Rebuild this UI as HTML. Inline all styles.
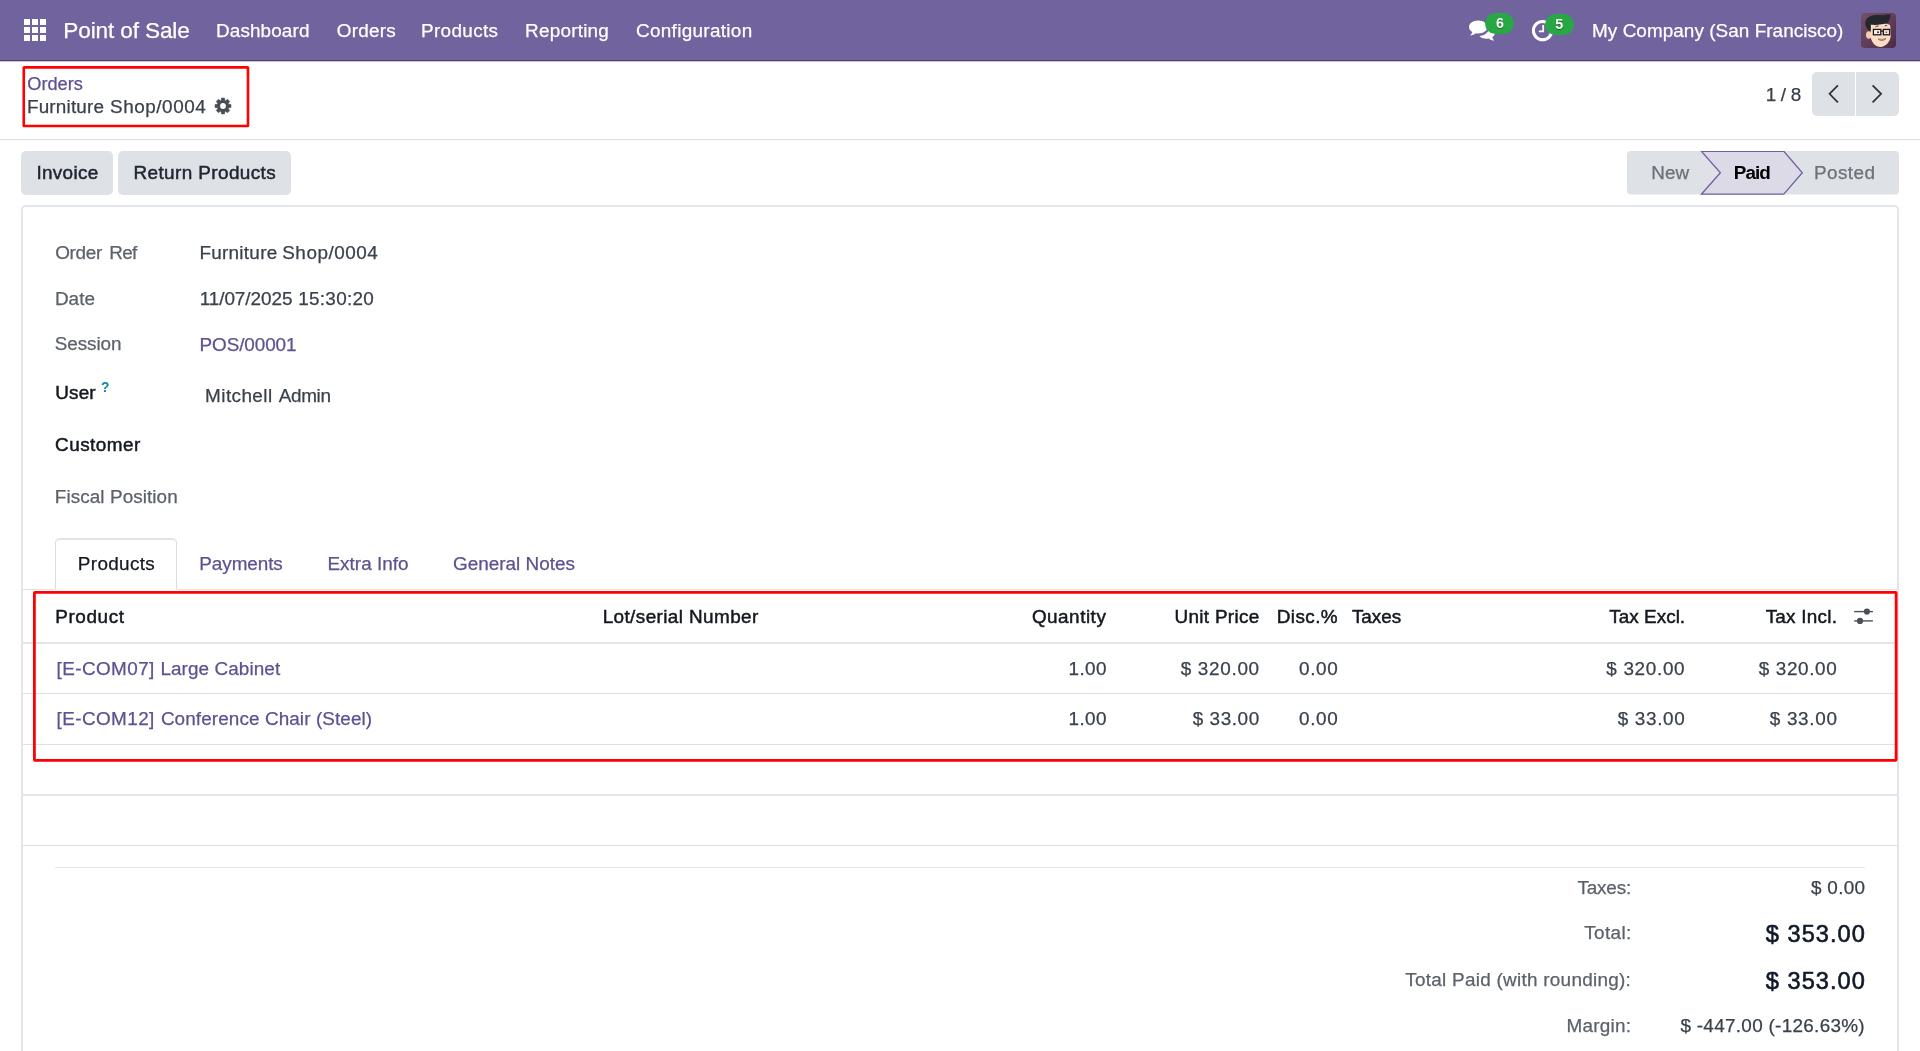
<!DOCTYPE html>
<html lang="en">
<head>
<meta charset="utf-8">
<title>Odoo - Furniture Shop/0004</title>
<style>
*{box-sizing:border-box;margin:0;padding:0}
html,body{width:1920px;height:1051px;overflow:hidden;background:#fff}
body{position:relative;font-family:"Liberation Sans",sans-serif;color:#374151}
.abs,.t{position:absolute}
.t{white-space:nowrap;line-height:1;display:block;-webkit-text-stroke:.25px}
.nv{color:#fff}
.bd{color:#fff;font-weight:bold;-webkit-text-stroke:0;text-shadow:0 1px 1px rgba(0,0,0,.4)}
.lk{color:#5d5190}
.tx{color:#3a414b}
.bt{color:#1f2630;-webkit-text-stroke:.5px}
.mu{color:#6b7079}
.bk{color:#000;font-weight:bold;-webkit-text-stroke:0}
.lb{color:#5c616a}
.hd{color:#14181f;-webkit-text-stroke:.48px}
.dk{color:#14181f}
.inf{color:#0f86ab;font-weight:bold;-webkit-text-stroke:0}
.big{color:#111827;-webkit-text-stroke:.6px}
/* navbar */
.navbar{left:0;top:0;width:1920px;height:62px;background:#71639e;border-bottom:1px solid #c9c5d6;box-shadow:inset 0 -1px 0 #4c4075}
.sq{position:absolute;width:6.3px;height:6.3px;background:#fff}
.badge{background:#28a745;border-radius:11px;height:21px;width:28.5px;top:13.3px}
.avatar{left:1861px;top:13px;width:35px;height:35px;border-radius:4px;overflow:hidden}
/* control panel */
.cp{left:0;top:62px;width:1920px;height:78px;background:#fff;border-bottom:1px solid #dcdfe5}
.redbox{border:2px solid #ff0000;background:transparent}
.btn{background:#dee1e6;border-radius:5px;top:151.2px;height:43.4px}
.pg{background:#dee1e6;top:72px;height:43.7px}
.sheet{left:21px;top:205px;width:1878px;height:900px;border:2px solid #e4e5ea;border-radius:5px;background:#fff}
.hl{height:1px;background:#dee1e6}
</style>
</head>
<body>
<!-- NAVBAR -->
<nav class="abs navbar" aria-label="Main navigation">
  <div class="apps" title="Home Menu">
    <span class="sq" style="left:24.0px;top:19.0px"></span>
    <span class="sq" style="left:32.0px;top:19.0px"></span>
    <span class="sq" style="left:40.0px;top:19.0px"></span>
    <span class="sq" style="left:24.0px;top:27.0px"></span>
    <span class="sq" style="left:32.0px;top:27.0px"></span>
    <span class="sq" style="left:40.0px;top:27.0px"></span>
    <span class="sq" style="left:24.0px;top:35.0px"></span>
    <span class="sq" style="left:32.0px;top:35.0px"></span>
    <span class="sq" style="left:40.0px;top:35.0px"></span>
  </div>
  <!-- discuss icon -->
  <svg class="abs" style="left:1468px;top:19px" width="27" height="23" viewBox="0 0 27 23">
    <path d="M10.2 1.6 C5.1 1.6 1 4.5 1 8.1 c0 2 1.3 3.8 3.3 5 c-.4 1.4-1.2 2.5-2.3 3.4 c2.3-.1 4.300-.9 5.700-2.200 c.8.2 1.6.3 2.500.3 c5.100 0 9.200-2.900 9.200-6.500 S15.300 1.600 10.200 1.600z" fill="#fff"/>
    <path d="M21 9.300 c0 .3 0 .6-.1.900 c-.7 3.600-4.600 6.400-9.600 6.700 c1.500 1.700 4.100 2.800 7 2.800 c.9 0 1.700-.1 2.500-.3 c1.400 1.300 3.400 2.100 5.700 2.200 c-1.100-.9-1.900-2-2.300-3.400 c1.600-1 2.600-2.400 2.600-4 c0-2.200-2.300-4.100-5.800-4.900z" fill="#fff" opacity=".96"/>
  </svg>
  <div class="abs badge" style="left:1485.4px"></div>
  <!-- activity clock -->
  <svg class="abs" style="left:1531px;top:19px" width="24" height="24" viewBox="0 0 24 24">
    <circle cx="11.6" cy="11.6" r="9.2" fill="none" stroke="#fff" stroke-width="3"/>
    <path d="M12.2 6v6.400h-4.400" fill="none" stroke="#fff" stroke-width="1.800"/>
  </svg>
  <div class="abs badge" style="left:1545.3px;top:13.6px"></div>
  <!-- avatar -->
  <svg class="abs avatar" viewBox="0 0 35 35" role="img" aria-label="Mitchell Admin">
    <defs><linearGradient id="avbg" x1="0" y1="0" x2="1" y2="1"><stop offset="0" stop-color="#73506b"/><stop offset="1" stop-color="#4d2a45"/></linearGradient></defs>
    <rect width="35" height="35" fill="url(#avbg)"/>
    <ellipse cx="7.800" cy="22" rx="2.800" ry="3.800" fill="#f6cdb4"/>
    <path d="M9.600 12 C9.600 10 29.200 9 29.300 13 L29.800 22 C29.800 29 24 34 19.500 34 C15 34 10.500 30 9.800 24z" fill="#fbdcc4"/>
    <path d="M4.200 10.500 C4 5 10 1.500 17 2 C22 2.200 25 2.500 26.500 1 C27 2 28.500 1 29.500 1.800 C29.500 5 28 8.500 26.500 10 C22 11.500 14 12.500 9.500 11.500 C10 14 10 16.500 9.300 18 C6.500 17 4.500 14 4.200 10.500z" fill="#24272c"/>
    <rect x="12.400" y="16.400" width="7.400" height="5.400" fill="#fff" fill-opacity=".55" stroke="#1c1d21" stroke-width="1.300"/>
    <rect x="22.300" y="16.400" width="6.400" height="5.400" fill="#f7d9d9" fill-opacity=".6" stroke="#1c1d21" stroke-width="1.300"/>
    <path d="M19.800 18.200h2.500" stroke="#1c1d21" stroke-width="1.200"/>
    <circle cx="17" cy="19.200" r="1" fill="#2b2b33"/>
    <circle cx="25.300" cy="19.200" r=".8" fill="#6b5560"/>
    <path d="M14.400 13.700 Q16 12.600 17.600 13.100" fill="none" stroke="#3a3034" stroke-width=".9"/>
    <path d="M23.800 12.900 Q25 12.100 26.200 12.800" fill="none" stroke="#3a3034" stroke-width=".9"/>
    <path d="M17.100 26 Q21 29.400 24.900 25.600 Q21 27 17.100 26z" fill="#f4d6d6" stroke="#7d5148" stroke-width=".7"/>
  </svg>
</nav>

<!-- CONTROL PANEL -->
<header class="abs cp"></header>
<svg class="abs" style="left:20px;top:63px" width="234" height="68" viewBox="20 63 234 68"><rect x="23.75" y="67.4" width="224.25" height="58.6" rx=".6" fill="none" stroke="#ff0000" stroke-width="2.6"/></svg>
<!-- gear -->
<svg class="abs" style="left:214px;top:97px" width="18" height="18" viewBox="-9 -9 18 18">
  <g fill="#484e57">
    <circle r="5.500"/>
    <path d="M-2.05 -4.8 L-1.5 -8 H1.5 L2.05 -4.8Z" stroke="#484e57" stroke-width=".5" stroke-linejoin="round" transform="rotate(0)"/>
    <path d="M-2.05 -4.8 L-1.5 -8 H1.5 L2.05 -4.8Z" stroke="#484e57" stroke-width=".5" stroke-linejoin="round" transform="rotate(45)"/>
    <path d="M-2.05 -4.8 L-1.5 -8 H1.5 L2.05 -4.8Z" stroke="#484e57" stroke-width=".5" stroke-linejoin="round" transform="rotate(90)"/>
    <path d="M-2.05 -4.8 L-1.5 -8 H1.5 L2.05 -4.8Z" stroke="#484e57" stroke-width=".5" stroke-linejoin="round" transform="rotate(135)"/>
    <path d="M-2.05 -4.8 L-1.5 -8 H1.5 L2.05 -4.8Z" stroke="#484e57" stroke-width=".5" stroke-linejoin="round" transform="rotate(180)"/>
    <path d="M-2.05 -4.8 L-1.5 -8 H1.5 L2.05 -4.8Z" stroke="#484e57" stroke-width=".5" stroke-linejoin="round" transform="rotate(225)"/>
    <path d="M-2.05 -4.8 L-1.5 -8 H1.5 L2.05 -4.8Z" stroke="#484e57" stroke-width=".5" stroke-linejoin="round" transform="rotate(270)"/>
    <path d="M-2.05 -4.8 L-1.5 -8 H1.5 L2.05 -4.8Z" stroke="#484e57" stroke-width=".5" stroke-linejoin="round" transform="rotate(315)"/>
  </g>
  <circle r="2.900" fill="#fff"/>
</svg>
<!-- pager -->
<div class="abs pg" style="left:1812px;width:43px;border-radius:5px 0 0 5px"></div>
<div class="abs pg" style="left:1856px;width:43px;border-radius:0 5px 5px 0"></div>
<svg class="abs" style="left:1812px;top:72px" width="87" height="44" viewBox="0 0 87 44">
  <path d="M25.900 13.300 L17.500 21.800 L25.900 30.400" fill="none" stroke="#2d3138" stroke-width="1.700"/>
  <path d="M60.600 13.300 L69.100 21.800 L60.600 30.400" fill="none" stroke="#2d3138" stroke-width="1.700"/>
</svg>

<!-- BUTTON ROW -->
<div class="abs btn" style="left:21.300px;width:91.400px"></div>
<div class="abs btn" style="left:118.100px;width:172.900px"></div>
<!-- statusbar -->
<svg class="abs" style="left:1627px;top:151px" width="272" height="44" viewBox="0 0 272 44">
  <rect x="0" y="0" width="272" height="43.600" rx="4" fill="#dee1e6"/>
  <path d="M74.400 0.300 H156.800 L175.300 21.700 L156.800 43.200 H74.400 L93.400 21.700 Z" fill="#dddae8" stroke="#6f619d" stroke-width="1.300"/>
</svg>

<!-- SHEET -->
<main class="abs sheet"></main>
<!-- tabs -->
<div class="abs hl" style="left:23px;top:589px;width:1874px"></div>
<div class="abs" style="left:55px;top:538px;width:122px;height:52px;border:1px solid #dadce2;border-top:2px solid #e2e3e8;border-bottom-color:#fff;border-radius:5px 5px 0 0;background:#fff"></div>
<!-- table lines -->
<div class="abs hl" style="left:23px;top:642px;width:1874px;height:2px;background:#e5e6ea"></div>
<div class="abs hl" style="left:23px;top:693px;width:1874px"></div>
<div class="abs hl" style="left:23px;top:744px;width:1874px"></div>
<div class="abs hl" style="left:23px;top:794px;width:1874px;height:2px;background:#e5e6ea"></div>
<div class="abs hl" style="left:23px;top:845px;width:1874px"></div>
<div class="abs hl" style="left:55px;top:867px;width:1810px;background:#e3e4e9"></div>
<!-- column options icon -->
<svg class="abs" style="left:1853px;top:606px" width="22" height="20" viewBox="0 0 22 20">
  <g stroke="#4b5058" stroke-width="1.400"><path d="M1.200 5.600H19.900"/><path d="M1.200 14.900H19.900"/></g>
  <circle cx="13.900" cy="5.600" r="3.100" fill="#4b5058"/><circle cx="7" cy="14.900" r="3.100" fill="#4b5058"/>
</svg>
<svg class="abs" style="left:30px;top:588px" width="1872" height="178" viewBox="30 588 1872 178"><rect x="34.4" y="592.35" width="1861.75" height="168.1" rx=".6" fill="none" stroke="#ff0000" stroke-width="2.8"/></svg>

<!-- TEXT -->
<div class="abs" id="txt" style="left:0;top:0;width:1920px;height:1051px;will-change:transform">
<span class="t nv" id="brand" style="left:63.35px;top:20.01px;font-size:22.6px;letter-spacing:-0.141px">Point of Sale</span>
<span class="t nv" id="m1" style="left:215.99px;top:22.00px;font-size:18.9px;letter-spacing:0.123px">Dashboard</span>
<span class="t nv" id="m2" style="left:336.69px;top:22.00px;font-size:18.9px;letter-spacing:0.264px">Orders</span>
<span class="t nv" id="m3" style="left:420.99px;top:22.00px;font-size:18.9px;letter-spacing:0.350px">Products</span>
<span class="t nv" id="m4" style="left:525.11px;top:22.00px;font-size:18.9px;letter-spacing:0.229px">Reporting</span>
<span class="t nv" id="m5" style="left:635.96px;top:22.00px;font-size:18.9px;letter-spacing:0.321px">Configuration</span>
<span class="t nv" id="comp" style="left:1592.06px;top:22.00px;font-size:18.9px;letter-spacing:0.057px">My Company (San Francisco)</span>
<span class="t bd" id="b6" style="left:1495.97px;top:16.00px;font-size:14.2px;letter-spacing:0.000px">6</span>
<span class="t bd" id="b5" style="left:1555.36px;top:17.00px;font-size:14.2px;letter-spacing:0.000px">5</span>
<span class="t lk" id="bc1" style="left:27.34px;top:75.00px;font-size:18.2px;letter-spacing:-0.012px">Orders</span>
<span class="t tx" id="bc2" style="left:26.91px;top:98.00px;font-size:18.9px;letter-spacing:0.195px">Furniture</span>
<span class="t tx" id="bc2b" style="left:110.01px;top:98.00px;font-size:18.9px;letter-spacing:0.547px">Shop/0004</span>
<span class="t tx" id="pager" style="left:1765.68px;top:86.00px;font-size:18.9px;letter-spacing:-0.312px">1 / 8</span>
<span class="t bt" id="btn1" style="left:36.49px;top:164.00px;font-size:18.9px;letter-spacing:0.311px">Invoice</span>
<span class="t bt" id="btn2" style="left:133.42px;top:164.00px;font-size:18.9px;letter-spacing:0.413px">Return Products</span>
<span class="t mu" id="st1" style="left:1651.37px;top:164.00px;font-size:18.9px;letter-spacing:0.005px">New</span>
<span class="t bk" id="st2" style="left:1733.82px;top:164.00px;font-size:18.9px;letter-spacing:-0.997px">Paid</span>
<span class="t mu" id="st3" style="left:1814.11px;top:164.00px;font-size:18.9px;letter-spacing:0.396px">Posted</span>
<span class="t lb" id="l1" style="left:55.26px;top:244.00px;font-size:18.9px;letter-spacing:-0.326px">Order</span>
<span class="t lb" id="l1b" style="left:109.23px;top:244.00px;font-size:18.9px;letter-spacing:-0.655px">Ref</span>
<span class="t tx" id="v1" style="left:199.38px;top:244.00px;font-size:18.9px;letter-spacing:0.281px">Furniture</span>
<span class="t tx" id="v1b" style="left:282.25px;top:244.00px;font-size:18.9px;letter-spacing:0.517px">Shop/0004</span>
<span class="t lb" id="l2" style="left:54.94px;top:290.00px;font-size:18.9px;letter-spacing:0.025px">Date</span>
<span class="t tx" id="v2" style="left:199.64px;top:290.00px;font-size:18.9px;letter-spacing:-0.029px">11/07/2025</span>
<span class="t tx" id="v2b" style="left:298.21px;top:290.00px;font-size:18.9px;letter-spacing:0.294px">15:30:20</span>
<span class="t lb" id="l3" style="left:54.73px;top:335.00px;font-size:18.9px;letter-spacing:-0.077px">Session</span>
<span class="t lk" id="v3" style="left:199.57px;top:336.00px;font-size:18.9px;letter-spacing:-0.088px">POS/00001</span>
<span class="t hd" id="l4" style="left:55.37px;top:384.00px;font-size:18.9px;letter-spacing:0.121px">User</span>
<span class="t inf" id="q" style="left:100.93px;top:381.01px;font-size:13.8px;letter-spacing:0.000px">?</span>
<span class="t tx" id="v4" style="left:205.11px;top:387.00px;font-size:18.9px;letter-spacing:0.422px">Mitchell</span>
<span class="t tx" id="v4b" style="left:278.75px;top:387.00px;font-size:18.9px;letter-spacing:-0.335px">Admin</span>
<span class="t hd" id="l5" style="left:55.05px;top:436.00px;font-size:18.9px;letter-spacing:0.486px">Customer</span>
<span class="t lb" id="l6" style="left:54.86px;top:488.00px;font-size:18.9px;letter-spacing:0.076px">Fiscal Position</span>
<span class="t dk" id="tb1" style="left:77.81px;top:555.00px;font-size:18.9px;letter-spacing:0.344px">Products</span>
<span class="t lk" id="tb2" style="left:199.30px;top:555.00px;font-size:18.9px;letter-spacing:-0.074px">Payments</span>
<span class="t lk" id="tb3" style="left:327.50px;top:555.00px;font-size:18.9px;letter-spacing:0.011px">Extra Info</span>
<span class="t lk" id="tb4" style="left:453.02px;top:555.00px;font-size:18.9px;letter-spacing:0.006px">General Notes</span>
<span class="t hd" id="h1" style="left:55.23px;top:608.00px;font-size:18.9px;letter-spacing:0.619px">Product</span>
<span class="t hd" id="h2" style="left:602.63px;top:608.00px;font-size:18.9px;letter-spacing:0.412px">Lot/serial Number</span>
<span class="t hd" id="h3" style="left:1031.88px;top:608.00px;font-size:18.9px;letter-spacing:0.514px">Quantity</span>
<span class="t hd" id="h4" style="left:1174.50px;top:608.00px;font-size:18.9px;letter-spacing:0.315px">Unit Price</span>
<span class="t hd" id="h5" style="left:1276.66px;top:608.00px;font-size:18.9px;letter-spacing:0.443px">Disc.%</span>
<span class="t hd" id="h6" style="left:1351.91px;top:608.00px;font-size:18.9px;letter-spacing:-0.030px">Taxes</span>
<span class="t hd" id="h7" style="left:1609.29px;top:608.00px;font-size:18.9px;letter-spacing:0.031px">Tax Excl.</span>
<span class="t hd" id="h8" style="left:1765.64px;top:608.00px;font-size:18.9px;letter-spacing:0.249px">Tax Incl.</span>
<span class="t lk" id="r1a" style="left:56.54px;top:660.00px;font-size:18.9px;letter-spacing:0.418px">[E-COM07]</span>
<span class="t lk" id="r1a2" style="left:160.43px;top:660.00px;font-size:18.9px;letter-spacing:0.088px">Large Cabinet</span>
<span class="t tx" id="r1b" style="left:1068.54px;top:660.00px;font-size:18.9px;letter-spacing:0.415px">1.00</span>
<span class="t tx" id="r1c" style="left:1180.66px;top:660.00px;font-size:18.9px;letter-spacing:0.704px">$ 320.00</span>
<span class="t tx" id="r1d" style="left:1298.93px;top:660.00px;font-size:18.9px;letter-spacing:0.720px">0.00</span>
<span class="t tx" id="r1e" style="left:1606.25px;top:660.00px;font-size:18.9px;letter-spacing:0.690px">$ 320.00</span>
<span class="t tx" id="r1f" style="left:1758.79px;top:660.00px;font-size:18.9px;letter-spacing:0.623px">$ 320.00</span>
<span class="t lk" id="r2a" style="left:56.54px;top:710.00px;font-size:18.9px;letter-spacing:0.418px">[E-COM12]</span>
<span class="t lk" id="r2a2" style="left:160.89px;top:710.00px;font-size:18.9px;letter-spacing:0.100px">Conference Chair (Steel)</span>
<span class="t tx" id="r2b" style="left:1068.54px;top:710.00px;font-size:18.9px;letter-spacing:0.415px">1.00</span>
<span class="t tx" id="r2c" style="left:1192.64px;top:710.00px;font-size:18.9px;letter-spacing:0.581px">$ 33.00</span>
<span class="t tx" id="r2d" style="left:1298.93px;top:710.00px;font-size:18.9px;letter-spacing:0.720px">0.00</span>
<span class="t tx" id="r2e" style="left:1617.87px;top:710.00px;font-size:18.9px;letter-spacing:0.625px">$ 33.00</span>
<span class="t tx" id="r2f" style="left:1769.85px;top:710.00px;font-size:18.9px;letter-spacing:0.670px">$ 33.00</span>
<span class="t lb" id="t1l" style="left:1577.40px;top:879.00px;font-size:18.9px;letter-spacing:-0.165px">Taxes:</span>
<span class="t tx" id="t1v" style="left:1810.97px;top:879.00px;font-size:18.9px;letter-spacing:0.310px">$ 0.00</span>
<span class="t lb" id="t2l" style="left:1584.28px;top:924.00px;font-size:18.9px;letter-spacing:0.354px">Total:</span>
<span class="t big" id="t2v" style="left:1765.80px;top:923.01px;font-size:23.6px;letter-spacing:1.037px">$ 353.00</span>
<span class="t lb" id="t3l" style="left:1405.30px;top:971.00px;font-size:18.9px;letter-spacing:0.273px">Total Paid (with rounding):</span>
<span class="t big" id="t3v" style="left:1765.80px;top:970.01px;font-size:23.6px;letter-spacing:1.037px">$ 353.00</span>
<span class="t lb" id="t4l" style="left:1566.59px;top:1017.00px;font-size:18.9px;letter-spacing:0.220px">Margin:</span>
<span class="t tx" id="t4v" style="left:1680.43px;top:1017.00px;font-size:18.9px;letter-spacing:0.299px">$ -447.00 (-126.63%)</span>
</div>
</body>
</html>
